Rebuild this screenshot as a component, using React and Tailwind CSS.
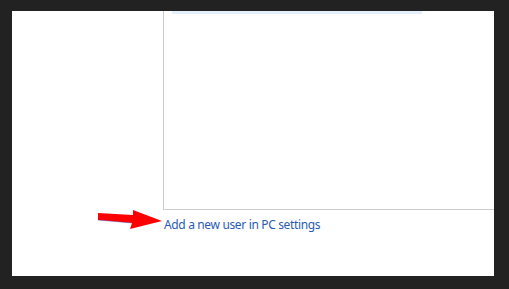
export default function App() {
  return (
    <div className="w-[509px] h-[289px] bg-[#222222] pt-[11px] pl-[12px] overflow-hidden relative">
      <div className="w-[482px] h-[265px] bg-white flex flex-col">
        <div className="ml-[151px] h-[199px] border-l border-b border-[#cccccc]">
          <div className="ml-[8px] w-[250px] h-[3px] bg-[#e3f0fb]"></div>
        </div>
        <div className="ml-[152px] mt-[7px] text-[12px] leading-[16px] tracking-[-0.35px] text-[#2a5cb4]" style={{ fontFamily: '"Noto Sans", sans-serif' }}>
          Add a new user in PC settings
        </div>
      </div>
      <svg className="absolute left-0 top-0" width="509" height="289" viewBox="0 0 509 289">
        <polygon points="98,213 133,215 133,210 162,221 130,229 132,223 98,220" fill="#ff0000" />
        <line x1="98" y1="220" x2="132" y2="223" stroke="#3040c0" strokeWidth="0.7" opacity="0.6" />
      </svg>
    </div>
  );
}
